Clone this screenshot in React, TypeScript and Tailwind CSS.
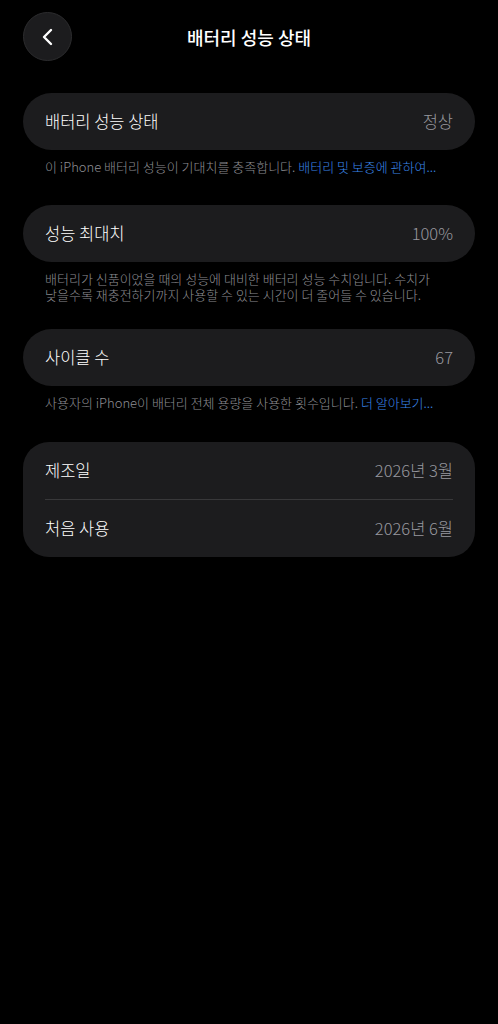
import React from 'react'

const font = { fontFamily: '"Noto Sans CJK KR", "Noto Sans", sans-serif' }

const Row = ({ label, value }: { label: string; value: string }) => (
  <div className="flex h-[57px] items-center justify-between px-[22px]">
    <span className="text-[16.5px] font-light text-white">{label}</span>
    <span className="text-[16.5px] font-light text-[#98989e]">{value}</span>
  </div>
)

const Footnote = ({ children }: { children: React.ReactNode }) => (
  <p className="mt-[9px] px-[22px] text-[13px] font-light leading-[16.5px] text-[#8e8e93]">{children}</p>
)

export default function App() {
  return (
    <div className="min-h-[1024px] w-full bg-black" style={font}>
      {/* 헤더 */}
      <div className="relative flex h-[74px] items-center justify-center">
        <button className="absolute left-[23px] top-[12px] flex h-[49px] w-[49px] items-center justify-center rounded-full border border-[#2c2c2e] bg-[#1c1c1e]">
          <svg width="20" height="20" viewBox="0 0 20 20" fill="none">
            <path d="M13 3 L6 10 L13 17" stroke="white" strokeWidth="2.4" strokeLinecap="round" strokeLinejoin="round" />
          </svg>
        </button>
        <h1 className="text-[18px] font-medium text-white">배터리 성능 상태</h1>
      </div>

      <div className="px-[23px] pt-[19px]">
        {/* 배터리 성능 상태 */}
        <div className="rounded-full bg-[#1c1c1e]">
          <Row label="배터리 성능 상태" value="정상" />
        </div>
        <Footnote>
          이 iPhone 배터리 성능이 기대치를 충족합니다.{' '}
          <span className="text-[#3a86e8]">배터리 및 보증에 관하여...</span>
        </Footnote>

        {/* 성능 최대치 */}
        <div className="mt-[29px] rounded-full bg-[#1c1c1e]">
          <Row label="성능 최대치" value="100%" />
        </div>
        <Footnote>
          배터리가 신품이었을 때의 성능에 대비한 배터리 성능 수치입니다. 수치가
          <br />
          낮을수록 재충전하기까지 사용할 수 있는 시간이 더 줄어들 수 있습니다.
        </Footnote>

        {/* 사이클 수 */}
        <div className="mt-[25px] rounded-full bg-[#1c1c1e]">
          <Row label="사이클 수" value="67" />
        </div>
        <Footnote>
          사용자의 iPhone이 배터리 전체 용량을 사용한 횟수입니다.{' '}
          <span className="text-[#3a86e8]">더 알아보기...</span>
        </Footnote>

        {/* 제조일 / 처음 사용 */}
        <div className="mt-[31px] rounded-[26px] bg-[#1c1c1e]">
          <Row label="제조일" value="2026년 3월" />
          <div className="mx-[22px] h-px bg-[#38383a]" />
          <Row label="처음 사용" value="2026년 6월" />
        </div>
      </div>
    </div>
  )
}
